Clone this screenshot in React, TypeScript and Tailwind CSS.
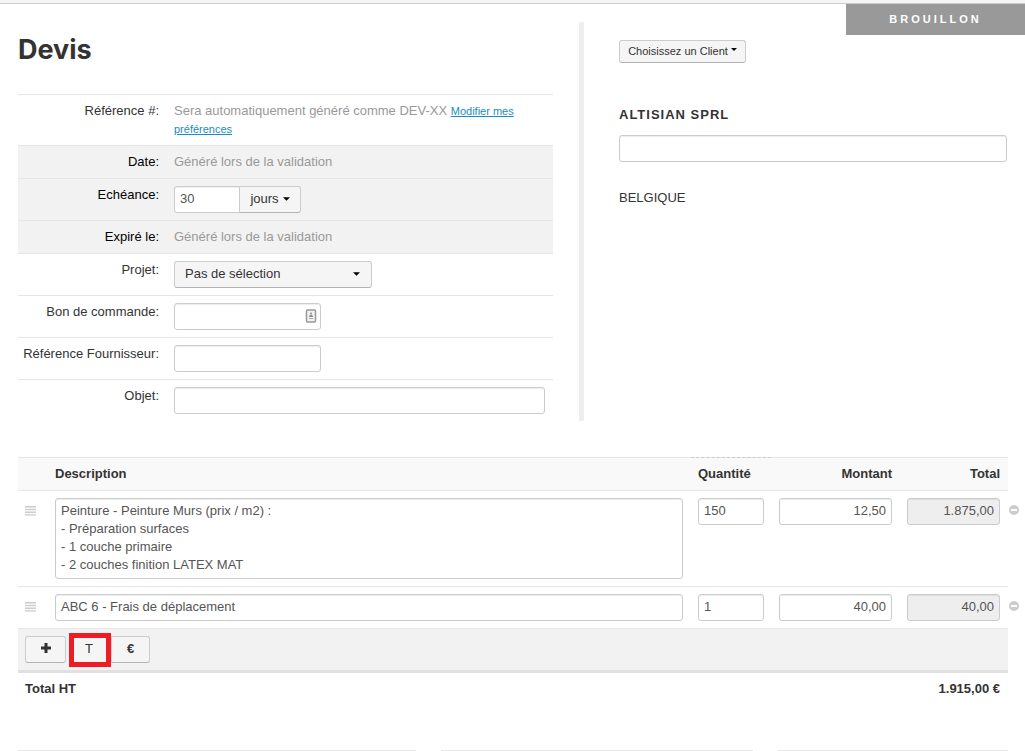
import React from 'react';
import clsx from 'clsx';

interface QuoteLine {
  id: string;
  description: string;
  rows: number;
  quantity: string;
  amount: string;
  total: string;
}

const lines: QuoteLine[] = [
  {
    id: 'line-1',
    description:
      'Peinture - Peinture Murs (prix / m2) :\n- Préparation surfaces\n- 1 couche primaire\n- 2 couches finition LATEX MAT',
    rows: 4,
    quantity: '150',
    amount: '12,50',
    total: '1.875,00',
  },
  {
    id: 'line-2',
    description: 'ABC 6 - Frais de déplacement',
    rows: 1,
    quantity: '1',
    amount: '40,00',
    total: '40,00',
  },
];

const fieldClasses =
  'block rounded-[3px] border border-[#ccc] px-[5px] text-[13px] leading-[18px] text-[#555] shadow-[inset_0_1px_1px_rgba(0,0,0,0.075)]';
const inputClasses = clsx(fieldClasses, 'h-[27px] pb-[2px]');
const buttonClasses = 'border border-[#ccc] border-b-[#b3b3b3] bg-[#f5f5f5] text-[#333]';

function Caret({ className = 'h-1 w-2' }: { className?: string }) {
  return (
    <svg viewBox="0 0 8 4" className={clsx('fill-black', className)} aria-hidden="true">
      <path d="M0 0h8L4 4z" />
    </svg>
  );
}

interface FieldRowProps {
  label: string;
  htmlFor?: string;
  shaded?: boolean;
  children: React.ReactNode;
}

function FieldRow({ label, htmlFor, shaded = false, children }: FieldRowProps) {
  const labelClasses = clsx('w-[141px] shrink-0 text-right', shaded && 'text-black');

  return (
    <div className={clsx('flex gap-[15px] border-t border-[#e6e6e6] py-[7px] pr-2', shaded && 'bg-[#f2f2f2]')}>
      {htmlFor ? (
        <label htmlFor={htmlFor} className={labelClasses}>
          {label}
        </label>
      ) : (
        <span className={labelClasses}>{label}</span>
      )}
      <div className="min-w-0 flex-1">{children}</div>
    </div>
  );
}

function ContactCardIcon() {
  return (
    <svg viewBox="0 0 12 14" className="absolute top-[6px] right-1 h-[14px] w-3" fill="none" aria-hidden="true">
      <rect x="1.5" y="1" width="9" height="12" rx="1" fill="#f2f2f2" stroke="#999" strokeWidth="1.5" />
      <circle cx="6" cy="4.5" r="1" fill="#8c8c8c" />
      <path d="M4 8c0-3 4-3 4 0z" fill="#8c8c8c" />
      <path d="M4 9.5h4" stroke="#aaa" />
    </svg>
  );
}

function QuoteDetails() {
  return (
    <section className="min-w-0 flex-1 pt-[11px]">
      <h1 className="mb-7 font-[Inter] text-[27px] leading-[33px] font-bold">Devis</h1>
      <FieldRow label="Référence #:">
        <p className="text-[#999]">
          Sera automatiquement généré comme DEV-XX{' '}
          <a href="#preferences" className="text-[11px] text-[#1a8dbd] underline">
            Modifier mes
            <br />
            préférences
          </a>
        </p>
      </FieldRow>
      <FieldRow label="Date:" shaded>
        <p className="text-[#999]">Généré lors de la validation</p>
      </FieldRow>
      <FieldRow label="Echéance:" htmlFor="due" shaded>
        <div className="flex">
          <input id="due" defaultValue="30" className={clsx(inputClasses, 'w-[66px] rounded-r-none bg-white')} />
          <button type="button" className={clsx(buttonClasses, '-ml-px flex h-[27px] w-[62px] items-center justify-center gap-1 rounded-r-[3px] pb-[2px]')}>
            jours
            <Caret className="h-1 w-[7px]" />
          </button>
        </div>
      </FieldRow>
      <FieldRow label="Expiré le:" shaded>
        <p className="text-[#999]">Généré lors de la validation</p>
      </FieldRow>
      <FieldRow label="Projet:" htmlFor="project">
        <div className="relative w-[198px]">
          <select id="project" className={clsx(buttonClasses, 'block h-[27px] w-full appearance-none rounded-[3px] px-[10px] pb-[2px]')}>
            <option>Pas de sélection</option>
          </select>
          <Caret className="pointer-events-none absolute top-[11px] right-[12px] h-1 w-[7px]" />
        </div>
      </FieldRow>
      <FieldRow label="Bon de commande:" htmlFor="order">
        <div className="relative w-[147px]">
          <input id="order" className={clsx(inputClasses, 'w-full')} />
          <ContactCardIcon />
        </div>
      </FieldRow>
      <FieldRow label="Référence Fournisseur:" htmlFor="supplier">
        <input id="supplier" className={clsx(inputClasses, 'w-[147px]')} />
      </FieldRow>
      <FieldRow label="Objet:" htmlFor="subject">
        <input id="subject" className={clsx(inputClasses, 'w-full')} />
      </FieldRow>
    </section>
  );
}

function ClientDetails() {
  return (
    <section className="w-[429px] shrink-0 border-l-[5px] border-[#eee] pt-[18px] pr-px pl-[35px]">
      <button type="button" className={clsx(buttonClasses, 'flex h-[23px] w-[127px] items-center justify-center gap-[3px] rounded-[3px] pb-[2px] text-[11px]')}>
        Choisissez un Client
        <Caret className="mb-[2px] h-[3px] w-[6px]" />
      </button>
      <h2 className="mt-[43px] text-[13px] leading-[18px] font-bold tracking-[1px]">
        <label htmlFor="client-name">ALTISIAN SPRL</label>
      </h2>
      <input id="client-name" className={clsx(inputClasses, 'mt-[11px] w-full')} />
      <p className="mt-[27px]">BELGIQUE</p>
    </section>
  );
}

function QuoteLineRow({ line }: { line: QuoteLine }) {
  return (
    <tr className="border-t border-[#e6e6e6] align-top">
      <td className="pt-[15px] pl-[7px]">
        <svg viewBox="0 0 11 10" className="h-[10px] w-[11px]" stroke="#ccc" strokeWidth="1.4" aria-hidden="true">
          <path d="M0 .8h11M0 3.5h11M0 6.2h11M0 8.9h11" />
        </svg>
      </td>
      <td className="py-[7px] pr-[15px]">
        <textarea
          aria-label="Description"
          rows={line.rows}
          defaultValue={line.description}
          className={clsx(fieldClasses, 'w-full resize-none overflow-hidden pt-[3px] pb-[4px]')}
        />
      </td>
      <td className="py-[7px] pr-[15px]">
        <input aria-label="Quantité" defaultValue={line.quantity} className={clsx(inputClasses, 'w-full')} />
      </td>
      <td className="py-[7px] pr-[15px]">
        <input aria-label="Montant" defaultValue={line.amount} className={clsx(inputClasses, 'w-full text-right')} />
      </td>
      <td className="relative py-[7px] pr-2">
        <input aria-label="Total" readOnly defaultValue={line.total} className={clsx(inputClasses, 'w-full bg-[#eee] text-right')} />
        <button type="button" aria-label="Supprimer la ligne" className="absolute top-[14px] -right-[11px]">
          <svg viewBox="0 0 10 10" className="block h-[10px] w-[10px]" aria-hidden="true">
            <circle cx="5" cy="5" r="5" fill="#ccc" />
            <path d="M2 4h6v2H2z" fill="#fff" />
          </svg>
        </button>
      </td>
    </tr>
  );
}

function QuoteLines() {
  return (
    <table className="mt-9 w-full table-fixed border-collapse">
      <colgroup>
        <col className="w-[37px]" />
        <col />
        <col className="w-[81px]" />
        <col className="w-[128px]" />
        <col className="w-[101px]" />
      </colgroup>
      <thead>
        <tr className="h-[33px] border-t border-[#e6e6e6] bg-[#f9f9f9] text-left">
          <th></th>
          <th>Description</th>
          <th className="relative before:absolute before:-top-px before:-left-[7px] before:w-20 before:border-t before:border-dashed before:border-[#ccc]">
            Quantité
          </th>
          <th className="pr-[15px] text-right">Montant</th>
          <th className="pr-2 text-right">Total</th>
        </tr>
      </thead>
      <tbody>
        {lines.map((line) => (
          <QuoteLineRow key={line.id} line={line} />
        ))}
        <tr className="border-t border-b-3 border-t-[#e6e6e6] border-b-[#e1e1e1] bg-[#f2f2f2]">
          <td colSpan={5} className="px-[7px] py-[7px]">
            <div className="flex">
              <button type="button" aria-label="Ajouter une ligne" className={clsx(buttonClasses, 'flex h-[27px] w-[41px] items-center justify-center rounded-[3px]')}>
                <svg viewBox="0 0 10 10" className="mb-[3px] h-[10px] w-[10px] fill-[#333]" aria-hidden="true">
                  <path d="M3.5 0h3v3.5H10v3H6.5V10h-3V6.5H0v-3h3.5z" />
                </svg>
              </button>
              {/* highlighted button, taller than its neighbours */}
              <button type="button" className="-mt-[3px] -mb-1 ml-[3px] h-[34px] w-[42px] border-5 border-[#f01c24] bg-[#f5f5f5] pr-[2px] pb-[3px]">
                T
              </button>
              <button type="button" className={clsx(buttonClasses, 'h-[27px] w-[39px] rounded-r-[3px] pb-[2px] font-bold')}>
                €
              </button>
            </div>
          </td>
        </tr>
      </tbody>
      <tfoot>
        <tr className="h-[33px] font-bold">
          <td colSpan={2} className="pl-[7px]">Total HT</td>
          <td colSpan={3} className="pr-2 text-right">1.915,00 €</td>
        </tr>
      </tfoot>
    </table>
  );
}

export default function App() {
  return (
    <div className="relative min-h-screen overflow-x-hidden border-t-[3px] border-[#f5f5f5] bg-white font-['Liberation_Sans',Arial,sans-serif] text-[13px] leading-[18px] text-[#333]">
      <div className="border-t border-[#ccc]" />
      <span className="absolute top-px right-0 h-[31px] w-[179px] bg-[#999] py-[6px] text-center text-[11px] font-bold tracking-[3px] text-white">
        BROUILLON
      </span>
      <main className="pt-[18px] pr-[17px] pl-[18px]">
        <div className="flex gap-[26px]">
          <QuoteDetails />
          <ClientDetails />
        </div>
        <QuoteLines />
        <div className="mt-[45px] grid grid-cols-[398fr_313fr_230fr] gap-[25px]">
          <div className="border-t border-[#e6e6e6]" />
          <div className="border-t border-[#e6e6e6]" />
          <div className="border-t border-[#e6e6e6]" />
        </div>
      </main>
    </div>
  );
}
